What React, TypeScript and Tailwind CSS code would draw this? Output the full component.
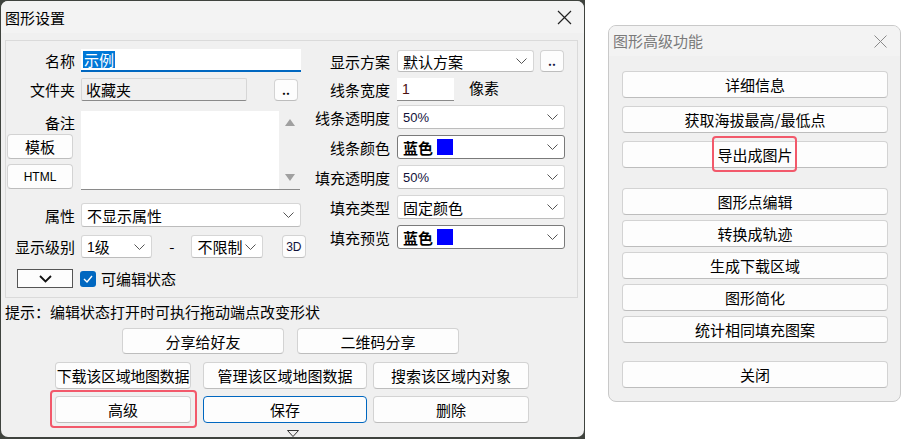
import React from "react";

function Chev() {
  return (
    <svg width="11" height="6" viewBox="0 0 11 6" className="shrink-0">
      <polyline points="0.5,0.5 5.5,5.5 10.5,0.5" fill="none" stroke="#555" strokeWidth="1" />
    </svg>
  );
}

function Sel({ className, dark, children }: { className: string; dark?: boolean; children: React.ReactNode }) {
  return (
    <div
      className={`flex items-center justify-between bg-white border rounded-[3px] pl-[5px] pr-[6px] whitespace-nowrap ${
        dark ? "border-[#7a7a7a]" : "border-[#d6d6d6] border-b-[#bcbcbc]"
      } ${className}`}
    >
      <div className="flex items-center gap-[4px] leading-none">{children}</div>
      <Chev />
    </div>
  );
}

function Btn({ className, children, blue }: { className: string; children: React.ReactNode; blue?: boolean }) {
  return (
    <div
      className={`flex items-center justify-center bg-[#fdfdfd] rounded-[4px] leading-none whitespace-nowrap ${
        blue ? "border border-[#0067c0]" : "border border-[#d3d3d3] border-b-[#bdbdbd]"
      } ${className}`}
    >
      {children}
    </div>
  );
}

function Label({ w, children }: { w: string; children: React.ReactNode }) {
  return <div className={`${w} shrink-0 text-right leading-none whitespace-nowrap`}>{children}</div>;
}

export default function App() {
  return (
    <div className="w-[903px] h-[439px] bg-white flex items-start font-['Noto_Sans_CJK_SC',sans-serif] text-[15px] text-black">
      {/* Left dialog */}
      <div className="w-[585px] h-[439px] bg-[#3f433e] pt-[1px] px-[1px] pb-[2px] shrink-0">
        <div className="w-full h-full bg-[#f0f0f0] rounded-[7px] flex flex-col overflow-hidden">
          <div className="h-[32px] bg-[#f3f3f3] flex items-center justify-between pl-[4px] pr-[12px]">
            <span className="text-[15px] leading-none">图形设置</span>
            <svg width="15" height="15" viewBox="0 0 15 15">
              <path d="M1 1L14 14M14 1L1 14" stroke="#222" strokeWidth="1.2" />
            </svg>
          </div>
          <div className="pt-[7px] pl-[4px]">
            <div className="w-[573px] h-[258px] border border-[#dadada] flex">
              {/* left column */}
              <div className="w-[300px] flex flex-col pt-[8px]">
                <div className="flex items-center h-[23px] gap-[6px]">
                  <Label w="w-[69px]">名称</Label>
                  <div className="w-[220px] h-[23px] bg-white border-b-2 border-[#0067c0] flex items-center pl-[2px]">
                    <span className="bg-[#0078d7] text-white leading-[17px] px-[1px]">示例</span>
                  </div>
                </div>
                <div className="flex items-center h-[23px] gap-[6px] mt-[6px]">
                  <Label w="w-[69px]">文件夹</Label>
                  <div className="w-[166px] h-[23px] bg-[#f0f0f0] border border-[#d6d6d6] border-b-[#8a8a8a] rounded-[2px] flex items-center pl-[4px] leading-none">
                    收藏夹
                  </div>
                  <Btn className="w-[24px] h-[22px] ml-[21px] text-[12px] font-bold">..</Btn>
                </div>
                <div className="flex h-[79px] gap-[6px] mt-[10px]">
                  <div className="w-[69px] shrink-0 flex flex-col items-end">
                    <div className="leading-none mt-[4px]">备注</div>
                    <div className="flex flex-col gap-[5px] mt-[4px] self-start ml-[1px]">
                      <Btn className="w-[66px] h-[25px]">模板</Btn>
                      <Btn className="w-[66px] h-[25px] font-['Liberation_Sans',sans-serif] text-[12px]">HTML</Btn>
                    </div>
                  </div>
                  <div className="w-[219px] h-[79px] bg-white border-b border-[#8a8a8a] flex justify-end">
                    <div className="w-[21px] h-full bg-[#f0f0f0] flex flex-col items-center justify-between py-[8px]">
                      <svg width="10" height="7" viewBox="0 0 10 7"><polygon points="5,0 10,7 0,7" fill="#a0a0a0" /></svg>
                      <svg width="10" height="7" viewBox="0 0 10 7"><polygon points="0,0 10,0 5,7" fill="#a0a0a0" /></svg>
                    </div>
                  </div>
                </div>
                <div className="flex items-center h-[24px] gap-[6px] mt-[13px]">
                  <Label w="w-[69px]">属性</Label>
                  <Sel className="w-[220px] h-[24px]">不显示属性</Sel>
                </div>
                <div className="flex items-center h-[23px] gap-[6px] mt-[8px]">
                  <Label w="w-[69px]">显示级别</Label>
                  <Sel className="w-[73px] h-[23px]">
                    <span className="font-['Liberation_Sans',sans-serif] text-[14px] -mr-[4px]">1</span>级
                  </Sel>
                  <span className="w-[28px] text-center leading-none">-</span>
                  <Sel className="w-[73px] h-[23px]">不限制</Sel>
                  <Btn className="w-[25px] h-[23px] ml-[13px] font-['Liberation_Sans',sans-serif] text-[12px] text-[#10103a]">3D</Btn>
                </div>
                <div className="flex items-center h-[19px] mt-[11px]">
                  <div className="w-[56px] h-[19px] ml-[11px] bg-[#fdfdfd] border border-[#555] flex items-center justify-center">
                    <svg width="13" height="8" viewBox="0 0 13 8">
                      <polyline points="1,1 6.5,6.5 12,1" fill="none" stroke="#111" strokeWidth="1.8" />
                    </svg>
                  </div>
                  <div className="w-[16px] h-[16px] ml-[7px] rounded-[3px] bg-[#0067c0] flex items-center justify-center">
                    <svg width="10" height="8" viewBox="0 0 10 8">
                      <polyline points="1,4 4,7 9,1" fill="none" stroke="white" strokeWidth="1.4" />
                    </svg>
                  </div>
                  <span className="ml-[5px] leading-none">可编辑状态</span>
                </div>
              </div>
              {/* right column */}
              <div className="flex flex-col pt-[9px]">
                <div className="flex items-center h-[22px] gap-[7px]">
                  <Label w="w-[84px]">显示方案</Label>
                  <Sel className="w-[137px] h-[22px]">默认方案</Sel>
                  <Btn className="w-[24px] h-[22px] ml-[-1px] text-[12px] font-bold text-[#10103a]">..</Btn>
                </div>
                <div className="flex items-center h-[23px] gap-[7px] mt-[6px]">
                  <Label w="w-[84px]">线条宽度</Label>
                  <div className="w-[57px] h-[23px] bg-white border-b border-[#8a8a8a] flex items-center pl-[5px] font-['Liberation_Sans',sans-serif] text-[14px] text-[#4a1010]">
                    1
                  </div>
                  <span className="ml-[8px] leading-none -mt-[5px]">像素</span>
                </div>
                <div className="flex items-center h-[24px] gap-[7px] mt-[4px]">
                  <Label w="w-[84px]">线条透明度</Label>
                  <Sel className="w-[168px] h-[24px]">
                    <span className="font-['Liberation_Sans',sans-serif] text-[13px] text-[#12123a]">50%</span>
                  </Sel>
                </div>
                <div className="flex items-center h-[24px] gap-[7px] mt-[6px]">
                  <Label w="w-[84px]">线条颜色</Label>
                  <Sel className="w-[168px] h-[24px]" dark>
                    <span className="font-bold">蓝色</span>
                    <span className="w-[16px] h-[16px] bg-[#0000ff] inline-block" />
                  </Sel>
                </div>
                <div className="flex items-center h-[24px] gap-[7px] mt-[6px]">
                  <Label w="w-[84px]">填充透明度</Label>
                  <Sel className="w-[168px] h-[24px]">
                    <span className="font-['Liberation_Sans',sans-serif] text-[13px] text-[#12123a]">50%</span>
                  </Sel>
                </div>
                <div className="flex items-center h-[24px] gap-[7px] mt-[6px]">
                  <Label w="w-[84px]">填充类型</Label>
                  <Sel className="w-[168px] h-[24px]">固定颜色</Sel>
                </div>
                <div className="flex items-center h-[24px] gap-[7px] mt-[6px]">
                  <Label w="w-[84px]">填充预览</Label>
                  <Sel className="w-[168px] h-[24px]" dark>
                    <span className="font-bold">蓝色</span>
                    <span className="w-[16px] h-[16px] bg-[#0000ff] inline-block" />
                  </Sel>
                </div>
              </div>
            </div>
          </div>
          <div className="mt-[4px] ml-[4px] leading-[20px]">提示：编辑状态打开时可执行拖动端点改变形状</div>
          <div className="flex mt-[6px] ml-[121px] gap-[13px]">
            <Btn className="w-[162px] h-[26px]">分享给好友</Btn>
            <Btn className="w-[162px] h-[26px]">二维码分享</Btn>
          </div>
          <div className="flex mt-[8px] ml-[54px]">
            <Btn className="w-[136px] h-[27px] tracking-[-0.3px]">下载该区域地图数据</Btn>
            <Btn className="w-[164px] h-[27px] ml-[12px]">管理该区域地图数据</Btn>
            <Btn className="w-[156px] h-[27px] ml-[6px]">搜索该区域内对象</Btn>
          </div>
          <div className="flex mt-[7px] ml-[54px]">
            <div className="relative">
              <Btn className="w-[136px] h-[27px]">高级</Btn>
              <div className="absolute left-[-5px] top-[-6px] w-[147px] h-[38px] border-2 border-[#f2596b] rounded-[4px]" />
            </div>
            <Btn className="w-[164px] h-[27px] ml-[12px]" blue>保存</Btn>
            <Btn className="w-[156px] h-[27px] ml-[6px]">删除</Btn>
          </div>
          <div className="mt-[7px] ml-[286px]">
            <svg width="12" height="7" viewBox="0 0 12 7">
              <polygon points="0.5,0.5 11.5,0.5 6,6.5" fill="none" stroke="#333" strokeWidth="1" />
            </svg>
          </div>
        </div>
      </div>

      {/* Right panel */}
      <div className="ml-[23px] mt-[25px] w-[293px] h-[377px] border border-[#c9c9c9] rounded-[8px] bg-[#f0f0f0] flex flex-col overflow-hidden shrink-0">
        <div className="h-[30px] bg-[#f3f3f3] flex items-center justify-between pl-[4px] pr-[13px]">
          <span className="text-[#7a7a7a] leading-none -mt-[2px]">图形高级功能</span>
          <svg width="13" height="13" viewBox="0 0 13 13">
            <path d="M0.5 0.5L12.5 12.5M12.5 0.5L0.5 12.5" stroke="#8a8a8a" strokeWidth="1" />
          </svg>
        </div>
        <div className="flex flex-col pl-[13px] pt-[15px]">
          <Btn className="w-[266px] h-[27px]">详细信息</Btn>
          <Btn className="w-[266px] h-[27px] mt-[8px]">获取海拔最高/最低点</Btn>
          <div className="relative mt-[8px]">
            <Btn className="w-[266px] h-[27px]">导出成图片</Btn>
            <div className="absolute left-[90px] top-[-5px] w-[85px] h-[36px] border-2 border-[#f2596b] rounded-[4px]" />
          </div>
          <Btn className="w-[266px] h-[27px] mt-[20px]">图形点编辑</Btn>
          <Btn className="w-[266px] h-[27px] mt-[5px]">转换成轨迹</Btn>
          <Btn className="w-[266px] h-[27px] mt-[5px]">生成下载区域</Btn>
          <Btn className="w-[266px] h-[27px] mt-[5px]">图形简化</Btn>
          <Btn className="w-[266px] h-[27px] mt-[5px]">统计相同填充图案</Btn>
          <Btn className="w-[266px] h-[27px] mt-[18px]">关闭</Btn>
        </div>
      </div>
    </div>
  );
}
